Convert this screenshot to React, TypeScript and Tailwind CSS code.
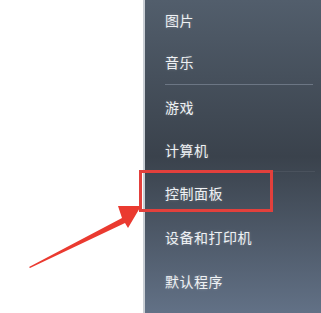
const items: { label: string; h: string; sep?: "strong" | "faint" }[] = [
  { label: "图片", h: "h-[40px]" },
  { label: "音乐", h: "h-[44px]", sep: "strong" },
  { label: "游戏", h: "h-[43px]" },
  { label: "计算机", h: "h-[43px]", sep: "faint" },
  { label: "控制面板", h: "h-[42px]" },
  { label: "设备和打印机", h: "h-[46px]" },
  { label: "默认程序", h: "h-[42px]" },
  { label: "", h: "h-[12px]" },
];

export default function App() {
  return (
    <div
      className="relative flex h-[313px] w-[321px] overflow-hidden bg-white"
      style={{ fontFamily: '"Noto Sans CJK SC", "Noto Sans", sans-serif' }}
    >
      <div className="w-[143px] shrink-0 bg-white" />
      <div className="w-[2px] shrink-0 bg-[#c9ced4]" />
      <div className="flex flex-1 flex-col bg-gradient-to-b from-[#525e6c] via-[#3a424c] to-[#627186] pl-[20px]">
        {items.map((it, i) => (
          <div key={i} className="flex flex-col">
            <div
              className={`${it.h} flex items-center text-[14px] leading-none tracking-[0.5px] text-[#eef1f4] [text-shadow:0_0_3px_rgba(255,255,255,0.25)]`}
            >
              {it.label}
            </div>
            {it.sep === "strong" && (
              <div className="mr-[8px] h-[1px] bg-[#6c7684]" />
            )}
            {it.sep === "faint" && (
              <div className="mr-[6px] h-[1px] bg-[#4a525d]" />
            )}
          </div>
        ))}
      </div>

      {/* highlight box */}
      <div className="pointer-events-none absolute left-[139px] top-[170px] h-[42px] w-[134px] border-[3px] border-[#e2403c]" />

      {/* arrow */}
      <svg
        className="pointer-events-none absolute left-0 top-0"
        width="321"
        height="313"
        viewBox="0 0 321 313"
      >
        <polygon
          points="29,267 122,218 118,206 141,206 128,228 125,223 30,268"
          fill="#ea3a30"
        />
      </svg>
    </div>
  );
}
